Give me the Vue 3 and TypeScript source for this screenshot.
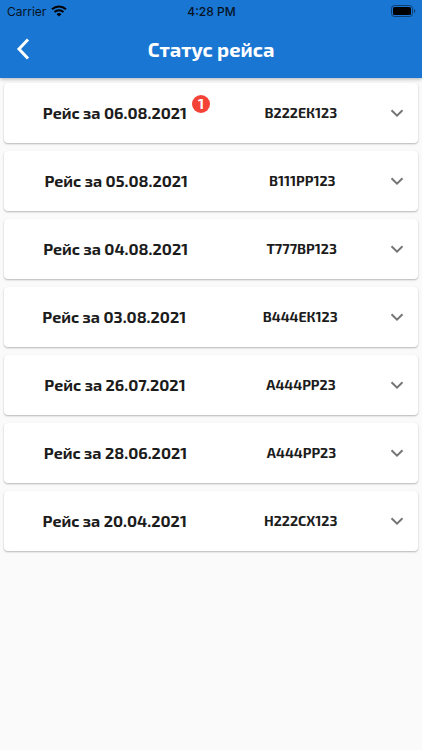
<script setup lang="ts">
import { ref } from 'vue'

interface Trip {
  date: string
  plate: string
  unread?: number
}

const trips: Trip[] = [
  { date: '06.08.2021', plate: 'В222ЕК123', unread: 1 },
  { date: '05.08.2021', plate: 'В111РР123' },
  { date: '04.08.2021', plate: 'Т777ВР123' },
  { date: '03.08.2021', plate: 'В444ЕК123' },
  { date: '26.07.2021', plate: 'А444РР23' },
  { date: '28.06.2021', plate: 'А444РР23' },
  { date: '20.04.2021', plate: 'Н222СХ123' },
]

const selected = ref<number | null>(null)

function toggle(index: number): void {
  selected.value = selected.value === index ? null : index
}
</script>

<template>
  <div class="screen">
    <header class="top">
      <div class="status">
        <div class="carrier">
          <span>Carrier</span>
          <svg class="wifi" viewBox="0 0 16 12" aria-hidden="true">
            <path d="M1 4.3a10.2 10.2 0 0 1 14 0" />
            <path d="M3.5 6.9a6.6 6.6 0 0 1 9 0" />
            <path class="dot" d="M8 11.6 5.6 9.2a3.4 3.4 0 0 1 4.8 0z" />
          </svg>
        </div>
        <span class="clock">4:28 PM</span>
        <svg class="battery" viewBox="0 0 25 12" aria-hidden="true">
          <rect class="shell" x="0.5" y="0.5" width="21" height="11" rx="3" />
          <rect x="2" y="2" width="18" height="8" rx="1.5" />
          <path class="tip" d="M23 4c1.8.6 1.8 3.4 0 4z" />
        </svg>
      </div>
      <div class="bar">
        <button class="back" type="button" aria-label="Назад">
          <svg viewBox="0 0 14 22" aria-hidden="true">
            <path d="M12 1.5 3 11l9 9.5" />
          </svg>
        </button>
        <h1>Статус рейса</h1>
      </div>
    </header>

    <main class="list">
      <button
        v-for="(trip, index) in trips"
        :key="trip.date"
        class="card"
        type="button"
        :aria-pressed="selected === index"
        @click="toggle(index)"
      >
        <span class="info">
          <span class="date">
            <span>Рейс за {{ trip.date }}</span>
            <span v-if="trip.unread" class="badge">{{ trip.unread }}</span>
          </span>
          <span class="plate">{{ trip.plate }}</span>
        </span>
        <span class="toggle">
          <svg viewBox="0 0 14 8" aria-hidden="true">
            <path d="m1.5 1.2 5.5 5.4 5.5-5.4" />
          </svg>
        </span>
      </button>
    </main>
  </div>
</template>

<style>
body {
  margin: 0;
  background: #fafafa;
}
</style>

<style scoped>
.screen {
  min-height: 100vh;
  background: #fafafa;
  color: #1c1c1c;
  font-family: 'Exo 2', 'Noto Sans', 'Open Sans', sans-serif;
}

.top {
  position: relative;
  background: #1976d2;
  box-shadow: 0 1px 4px rgba(0, 0, 0, 0.3);
}

.status {
  display: grid;
  grid-template-columns: 1fr auto 1fr;
  align-items: center;
  height: 22px;
  padding: 0 6px 0 7px;
  color: #06121f;
  font-family: Inter, 'Liberation Sans', sans-serif;
  font-size: 12px;
}

.carrier {
  display: flex;
  align-items: center;
  gap: 5px;
}

.wifi {
  width: 16px;
  height: 12px;
  fill: none;
  stroke: #000;
  stroke-width: 2;
}

.wifi .dot {
  fill: #000;
  stroke: none;
}

.clock {
  font-weight: 500;
}

.battery {
  justify-self: end;
  width: 25px;
  height: 12px;
}

.battery .shell {
  fill: none;
  stroke: #0d3f70;
}

.battery .tip {
  fill: #0d3f70;
}

.bar {
  display: grid;
  grid-template-columns: 46px 1fr 46px;
  align-items: center;
  padding-bottom: 2px;
}

.back {
  display: flex;
  align-items: center;
  justify-content: center;
  height: 54px;
  padding: 0;
  border: 0;
  background: none;
  cursor: pointer;
}

.back svg {
  width: 14px;
  height: 22px;
  fill: none;
  stroke: #fff;
  stroke-width: 3;
}

h1 {
  margin: 0;
  color: #fff;
  font-size: 20px;
  font-weight: 700;
  line-height: 24px;
  text-align: center;
}

.list {
  display: flex;
  flex-direction: column;
  gap: 8px;
  padding: 5px 4px;
}

.card {
  display: flex;
  align-items: center;
  min-height: 60px;
  padding: 0;
  border: 0;
  border-radius: 4px;
  background: #fff;
  box-shadow: 0 1px 2px rgba(0, 0, 0, 0.28);
  color: inherit;
  font: inherit;
  cursor: pointer;
}

.info {
  display: flex;
  flex: 1;
  align-items: center;
  justify-content: space-around;
}

.date {
  position: relative;
  font-size: 16px;
  font-weight: 700;
  line-height: 24px;
  white-space: nowrap;
}

.badge {
  position: absolute;
  top: -6px;
  left: calc(100% + 5px);
  width: 18px;
  height: 18px;
  border-radius: 50%;
  background: #f44336;
  color: #fff;
  font-size: 14px;
  line-height: 18px;
  text-align: center;
}

.plate {
  font-size: 14px;
  font-weight: 700;
  line-height: 20px;
}

.toggle {
  display: flex;
  justify-content: center;
  width: 42px;
}

.toggle svg {
  width: 14px;
  height: 8px;
  fill: none;
  stroke: #757575;
  stroke-width: 2;
}
</style>
